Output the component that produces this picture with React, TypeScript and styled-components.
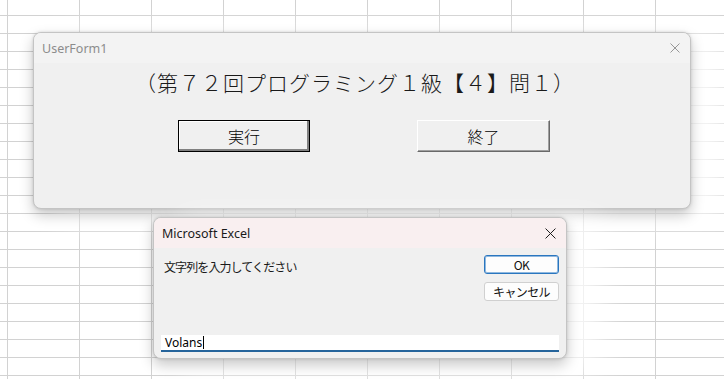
import styled, { createGlobalStyle } from "styled-components";

const GlobalStyle = createGlobalStyle`
  html, body {
    margin: 0;
    padding: 0;
    background: #fff;
  }
  body {
    font-family: "Noto Sans", "Noto Sans CJK JP", sans-serif;
  }
`;

const JP = `"Noto Sans CJK JP", "Noto Sans", sans-serif`;

// excel sheet behind the windows
const Sheet = styled.div`
  position: relative;
  width: 724px;
  height: 379px;
  overflow: hidden;
  background-color: #fff;
  background-image: linear-gradient(to right, #d2d2d2 1px, transparent 1px),
    linear-gradient(to bottom, #d2d2d2 1px, transparent 1px);
  background-size: 72px 18px;
  background-position: 7px 15px;
`;

const Window = styled.div<{ $x: number; $y: number; $w: number; $h: number }>`
  position: absolute;
  left: ${(p) => p.$x}px;
  top: ${(p) => p.$y}px;
  width: ${(p) => p.$w}px;
  height: ${(p) => p.$h}px;
  box-sizing: border-box;
  display: flex;
  flex-direction: column;
  background: #f0f0f0;
  border: 1px solid #c4c4c4;
  border-radius: 8px;
  overflow: hidden;
  box-shadow: 0 6px 14px rgba(0, 0, 0, 0.22), 0 0 3px rgba(0, 0, 0, 0.15),
    30px 8px 30px 6px rgba(255, 255, 255, 0.75);
`;

const TitleBar = styled.div<{ $bg: string }>`
  height: 30px;
  flex-shrink: 0;
  display: flex;
  align-items: center;
  justify-content: space-between;
  padding: 0 10px 0 8px;
  background: ${(p) => p.$bg};
`;

const Title = styled.span<{ $color: string }>`
  font-family: "Noto Sans", "Open Sans", sans-serif;
  font-size: 12.5px;
  color: ${(p) => p.$color};
`;

const CloseIcon = ({ color, size }: { color: string; size: number }) => (
  <svg width={size} height={size} viewBox="0 0 10 10">
    <path d="M0.5 0.5 L9.5 9.5 M9.5 0.5 L0.5 9.5" stroke={color} strokeWidth="0.9" fill="none" />
  </svg>
);

/* UserForm1 */

const FormBody = styled.div`
  flex: 1;
  display: flex;
  flex-direction: column;
  padding: 8px 0 0 101px;
`;

const Heading = styled.div`
  font-family: ${JP};
  font-size: 21px;
  font-weight: 300;
  letter-spacing: 1px;
  line-height: 22px;
  color: #1a1a1a;
  white-space: nowrap;
`;

const ButtonRow = styled.div`
  display: flex;
  gap: 107px;
  margin: 27px 0 0 43px;
`;

const FormButton = styled.button<{ $default?: boolean }>`
  width: ${(p) => (p.$default ? 132 : 133)}px;
  height: 32px;
  padding: 0;
  background: #f0f0f0;
  font-family: ${JP};
  font-size: 16px;
  font-weight: 300;
  color: #000;
  border: 1px solid;
  border-color: ${(p) => (p.$default ? "#000" : "#fff #696969 #696969 #fff")};
  box-shadow: ${(p) =>
    p.$default
      ? "inset -2px -2px #808080, inset 1px 1px #fff"
      : "inset -1px -1px #a0a0a0"};
`;

/* Microsoft Excel input box */

const DialogBody = styled.div`
  flex: 1;
  display: flex;
  flex-direction: column;
  padding: 7px 7px 6px 7px;
`;

const PromptRow = styled.div`
  display: flex;
  justify-content: space-between;
  align-items: flex-start;
`;

const Prompt = styled.div`
  font-family: ${JP};
  font-size: 12px;
  letter-spacing: -0.9px;
  color: #1a1a1a;
  padding: 3px 0 0 3px;
`;

const ButtonStack = styled.div`
  display: flex;
  flex-direction: column;
  gap: 8px;
`;

const DialogButton = styled.button<{ $primary?: boolean }>`
  width: 75px;
  height: 19px;
  padding: 0;
  box-sizing: border-box;
  background: #fdfdfd;
  border: 1px solid ${(p) => (p.$primary ? "#2a76bf" : "#d0d0d0")};
  box-shadow: ${(p) => (p.$primary ? "inset 0 0 0 1px #8fb8df" : "none")};
  border-radius: 3px;
  font-family: ${JP};
  font-size: 12px;
  letter-spacing: -0.6px;
  color: #111;
`;

const InputBox = styled.div`
  margin-top: auto;
  height: 17px;
  box-sizing: border-box;
  background: #fff;
  border-bottom: 2px solid #25649b;
  display: flex;
  align-items: center;
  padding-left: 4px;
  font-family: "Noto Sans", sans-serif;
  font-size: 12px;
  color: #000;
`;

const Caret = styled.span`
  display: inline-block;
  width: 1px;
  height: 13px;
  background: #000;
  margin-left: 1px;
`;

export default function App() {
  return (
    <>
      <GlobalStyle />
      <Sheet>
        <Window $x={33} $y={32} $w={658} $h={177}>
          <TitleBar $bg="#f3f3f3">
            <Title $color="#8c8c8c">UserForm1</Title>
            <CloseIcon color="#8c8c8c" size={10} />
          </TitleBar>
          <FormBody>
            <Heading>（第７２回プログラミング１級【４】問１）</Heading>
            <ButtonRow>
              <FormButton $default>実行</FormButton>
              <FormButton>終了</FormButton>
            </ButtonRow>
          </FormBody>
        </Window>

        <Window $x={153} $y={217} $w={414} $h={142}>
          <TitleBar $bg="#f9eff0">
            <Title $color="#1a1a1a">Microsoft Excel</Title>
            <CloseIcon color="#1a1a1a" size={11} />
          </TitleBar>
          <DialogBody>
            <PromptRow>
              <Prompt>文字列を入力してください</Prompt>
              <ButtonStack>
                <DialogButton $primary>OK</DialogButton>
                <DialogButton>キャンセル</DialogButton>
              </ButtonStack>
            </PromptRow>
            <InputBox>
              Volans
              <Caret />
            </InputBox>
          </DialogBody>
        </Window>
      </Sheet>
    </>
  );
}
